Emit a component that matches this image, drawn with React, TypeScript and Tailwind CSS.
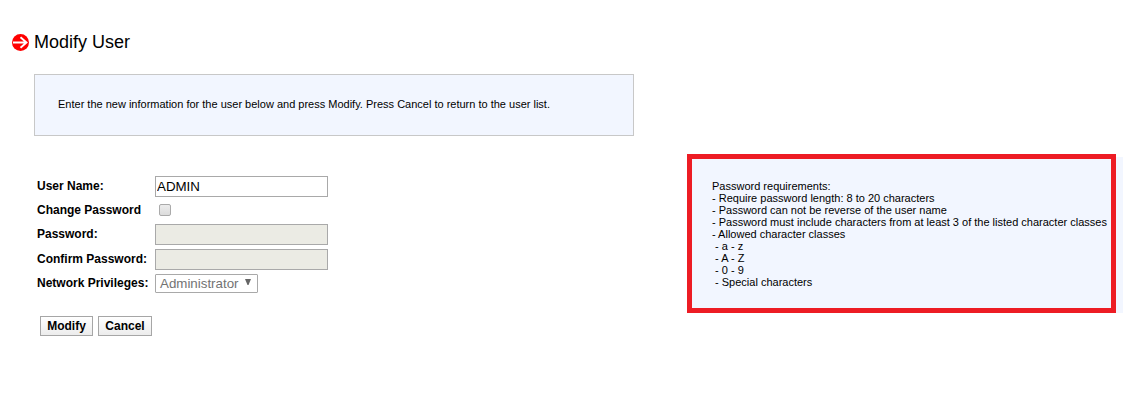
import React, { useState } from "react";

const requirements = [
  "Password requirements:",
  "- Require password length: 8 to 20 characters",
  "- Password can not be reverse of the user name",
  "- Password must include characters from at least 3 of the listed character classes",
  "- Allowed character classes",
  " - a - z",
  " - A - Z",
  " - 0 - 9",
  " - Special characters",
];

const inputClass =
  "block h-[21px] w-[173px] rounded-none border border-[#a9a9a9] px-px text-[13.333px] leading-[15px] text-black outline-none";

const buttonClass =
  "h-5 border border-[#a6a6a6] bg-linear-to-b from-white to-[#ececec] text-center text-[12px] leading-[18px] font-bold text-black";

function Row({ id, label, children }: { id: string; label: string; children: React.ReactNode }) {
  return (
    <div className="flex items-start">
      <label htmlFor={id} className="w-[118px] pt-0.5 text-[12px] leading-4 font-bold whitespace-nowrap">
        {label}
      </label>
      {children}
    </div>
  );
}

export default function App() {
  const [userName, setUserName] = useState("ADMIN");
  const [changePassword, setChangePassword] = useState(false);

  return (
    <div className="h-[417px] w-[1123px] overflow-hidden bg-white font-['Liberation_Sans',Arial,sans-serif] text-black">
      <header className="flex h-[74px] items-start pt-8 pl-3">
        <svg className="mt-0.5 h-[17px] w-[17px]" viewBox="0 0 17 17" fill="none">
          <circle cx="8.5" cy="8.5" r="8.5" fill="#ff0000" />
          <path d="M1 8.5H14.5M8.5 3.2L14.5 8.5L8.5 13.8" stroke="white" strokeWidth="1.9" />
        </svg>
        <h1 className="ml-[5px] text-[18px] leading-5">Modify User</h1>
      </header>

      <p className="ml-[34px] h-[62px] w-[600px] border border-[#c8c8c8] bg-[#f2f6ff] pt-[23px] pl-[23px] text-[11px] leading-3">
        Enter the new information for the user below and press Modify. Press Cancel to return to the user list.
      </p>

      <main className="flex items-start">
        <form className="w-[687px] pt-10 pl-[37px]" onSubmit={(e) => e.preventDefault()}>
          <div className="h-6">
            <Row id="user" label="User Name:">
              <input id="user" className={inputClass} value={userName} onChange={(e) => setUserName(e.target.value)} />
            </Row>
          </div>
          <div className="h-6">
            <Row id="change" label="Change Password">
              <input
                id="change"
                type="checkbox"
                className="mt-1 ml-1 h-3 w-3 appearance-none rounded-[2px] border border-[#aaaaaa] bg-linear-to-b from-[#ececec] to-[#dcdcdc]"
                checked={changePassword}
                onChange={(e) => setChangePassword(e.target.checked)}
              />
            </Row>
          </div>
          <div className="h-[25px]">
            <Row id="password" label="Password:">
              <input id="password" type="password" disabled={!changePassword} className={`${inputClass} bg-[#ebebe4]`} />
            </Row>
          </div>
          <div className="h-6">
            <Row id="confirm" label="Confirm Password:">
              <input id="confirm" type="password" disabled={!changePassword} className={`${inputClass} bg-[#ebebe4]`} />
            </Row>
          </div>
          <div className="h-[43px]">
            <Row id="privileges" label="Network Privileges:">
              <button
                id="privileges"
                type="button"
                disabled
                className="mt-px flex h-[19px] w-[103px] items-center rounded-[1px] border border-[#a9a9a9] bg-white pl-1 text-[13.333px] leading-[17px] text-[#737373]"
              >
                Administrator
                <svg className="mb-[3px] ml-[6px] h-[6px] w-[6px]" viewBox="0 0 6 6">
                  <path d="M0 0H6L3.5 6H2.5Z" fill="#666666" />
                </svg>
              </button>
            </Row>
          </div>
          <div className="flex gap-[5px] pl-[3px]">
            <button className={`${buttonClass} w-[53px]`}>Modify</button>
            <button className={`${buttonClass} w-[54px]`}>Cancel</button>
          </div>
        </form>

        <aside className="mt-[18px] flex items-end">
          <div className="h-[159px] w-[429px] border-5 border-[#ed1c24] bg-[#f2f6ff] pt-[21px] pl-5 text-[11px] leading-3">
            {requirements.map((line) => (
              <div key={line} className="whitespace-pre">
                {line}
              </div>
            ))}
          </div>
          <div className="h-[156px] w-[7px] bg-[#f2f6ff]" />
        </aside>
      </main>
    </div>
  );
}
